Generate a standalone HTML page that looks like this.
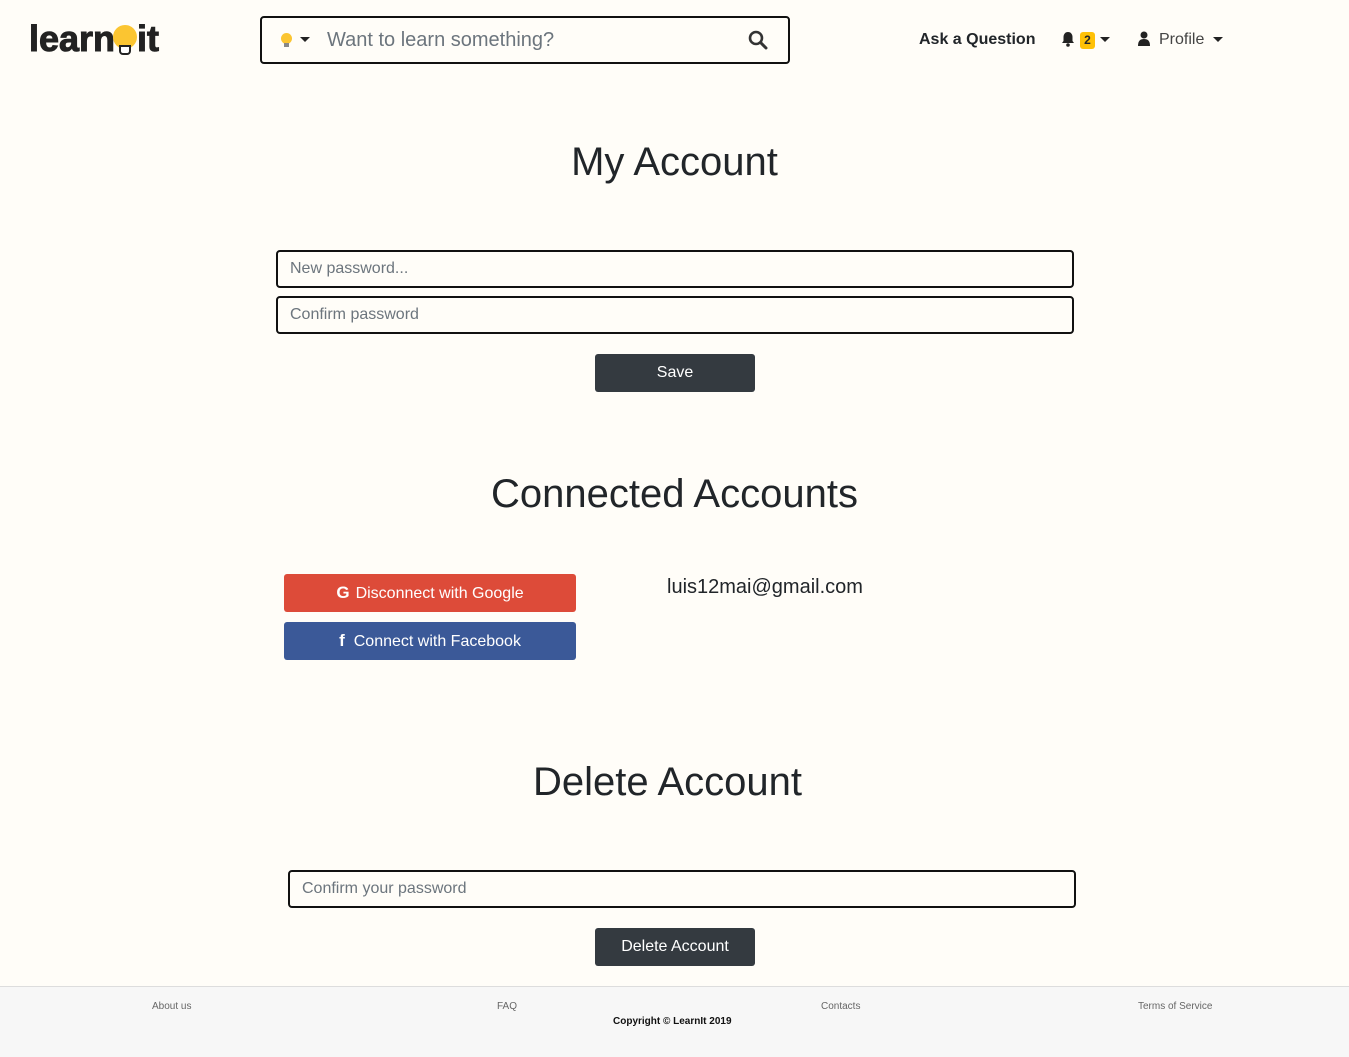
<!DOCTYPE html>
<html><head><meta charset="utf-8"><style>
*{box-sizing:border-box;margin:0;padding:0}
body{width:1349px;height:1057px;background:#fffdf8;font-family:"Liberation Sans",Arial,sans-serif;color:#212529;position:relative;overflow:hidden}
.abs{position:absolute}
.logo{left:29px;top:19px;font-size:36px;font-weight:900;color:#222;letter-spacing:0px;line-height:40px;-webkit-text-stroke:1px #222}
.search{left:260px;top:16px;width:530px;height:48px;border:2px solid #111;border-radius:4px}
.search .ph{position:absolute;left:65px;top:11px;font-size:20px;color:#6c757d}
.caret{display:inline-block;width:0;height:0;border-left:5px solid transparent;border-right:5px solid transparent;border-top:5px solid #222;vertical-align:middle}
.nav{font-size:16px;top:31px}
.inp{position:absolute;height:38px;border:2px solid #111;border-radius:4px;background:#fffdf8;font-size:16px;color:#6c757d;padding:8px 12px;line-height:18px}
.h{position:absolute;left:0;width:1349px;text-align:center;font-size:40px;font-weight:400;color:#212529}
.btn{position:absolute;height:38px;border-radius:3px;color:#fff;font-size:16px;text-align:center;line-height:38px}
.dark{background:#343a40}
.footer{left:0;top:986px;width:1349px;height:71px;background:#f7f7f7;border-top:1px solid #ddd;font-size:10px;color:#666}
</style></head><body>
<div class="abs logo">learn<span style="display:inline-block;width:26px;position:relative;height:30px;vertical-align:-4px;margin-left:-4px"><span style="position:absolute;left:2px;top:0px;width:24px;height:24px;border-radius:50%;background:#fbc531"></span><span style="position:absolute;left:8px;top:20px;width:12px;height:10px;border-radius:0 0 4px 4px;background:#fff;border:2px solid #222"></span></span>it</div>
<div class="abs search">
 <span style="position:absolute;left:19px;top:15px;width:11px;height:11px;border-radius:50%;background:#fbc531"></span>
 <span style="position:absolute;left:22px;top:25px;width:5px;height:4px;background:#888"></span>
 <span class="caret" style="position:absolute;left:38px;top:19px"></span>
 <span class="ph">Want to learn something?</span>
 <svg style="position:absolute;left:486px;top:12px" width="20" height="20" viewBox="0 0 20 20"><circle cx="8" cy="8" r="6" fill="none" stroke="#333" stroke-width="2.6"/><line x1="12.5" y1="12.5" x2="18" y2="18" stroke="#333" stroke-width="3" stroke-linecap="round"/></svg>
</div>
<div class="abs nav" style="left:919px;font-weight:bold">Ask a Question</div>
<svg class="abs" style="left:1061px;top:31px" width="14" height="16" viewBox="0 0 14 16"><path d="M7 1c-3 0-4.5 2.5-4.5 5v4L1 12h12l-1.5-2V6C11.5 3.5 10 1 7 1z" fill="#222"/><circle cx="7" cy="14" r="1.8" fill="#222"/></svg>
<div class="abs" style="left:1080px;top:32px;width:15px;height:17px;background:#ffc107;border-radius:3px;font-size:12px;font-weight:bold;text-align:center;line-height:17px">2</div>
<span class="abs caret" style="left:1100px;top:37px"></span>
<svg class="abs" style="left:1138px;top:31px" width="12" height="16" viewBox="0 0 12 16"><circle cx="6" cy="4" r="3.5" fill="#222"/><path d="M0 15c0-5 2-7 6-7s6 2 6 7z" fill="#222"/></svg>
<div class="abs nav" style="left:1159px;color:#444">Profile</div>
<span class="abs caret" style="left:1213px;top:37px"></span>

<div class="h" style="top:140px">My Account</div>
<div class="inp" style="left:276px;top:250px;width:798px">New password...</div>
<div class="inp" style="left:276px;top:296px;width:798px">Confirm password</div>
<div class="btn dark" style="left:595px;top:354px;width:160px">Save</div>

<div class="h" style="top:472px">Connected Accounts</div>
<div class="btn" style="left:284px;top:574px;width:292px;background:#dd4b39"><b style="font-size:17px;margin-right:6px">G</b>Disconnect with Google</div>
<div class="btn" style="left:284px;top:622px;width:292px;background:#3b5998"><b style="font-size:17px;margin-right:9px">f</b>Connect with Facebook</div>
<div class="abs" style="left:667px;top:576px;font-size:20px">luis12mai@gmail.com</div>

<div class="h" style="top:760px;left:-7px">Delete Account</div>
<div class="inp" style="left:288px;top:870px;width:788px">Confirm your password</div>
<div class="btn dark" style="left:595px;top:928px;width:160px">Delete Account</div>

<div class="abs footer">
 <span class="abs" style="left:152px;top:14px">About us</span>
 <span class="abs" style="left:497px;top:14px">FAQ</span>
 <span class="abs" style="left:821px;top:14px">Contacts</span>
 <span class="abs" style="left:1138px;top:14px">Terms of Service</span>
 <span class="abs" style="left:613px;top:29px;color:#111;font-weight:bold">Copyright © LearnIt 2019</span>
</div>
</body></html>
